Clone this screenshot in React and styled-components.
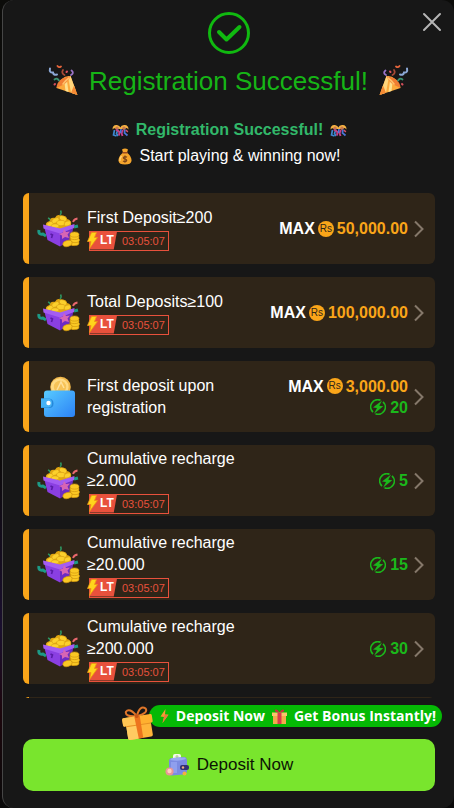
import React, { useState } from 'react';
import styled, { createGlobalStyle } from 'styled-components';

const GlobalStyle = createGlobalStyle`
    * {
        box-sizing: border-box;
        margin: 0;
        padding: 0;
    }
    body {
        background: linear-gradient(#0c0c0a 0%, #0c0a08 55%, #1a0f2e 78%, #1c060c 88%, #0a0a0a 100%);
        font-family: "Liberation Sans", Arial, sans-serif;
        color: white;
    }
    button {
        font-family: inherit;
        border: none;
        background: none;
        cursor: pointer;
    }
    svg {
        display: block;
        flex-shrink: 0;
    }
`;

const tasks = [
    { id: 1, title: 'First Deposit≥200', max: '50,000.00', timer: '03:05:07' },
    { id: 2, title: 'Total Deposits≥100', max: '100,000.00', timer: '03:05:07' },
    { id: 3, title: 'First deposit upon registration', max: '3,000.00', energy: 20, wallet: true },
    { id: 4, title: 'Cumulative recharge ≥2.000', energy: 5, timer: '03:05:07' },
    { id: 5, title: 'Cumulative recharge ≥20.000', energy: 15, timer: '03:05:07' },
    { id: 6, title: 'Cumulative recharge ≥200.000', energy: 30, timer: '03:05:07' },
];

//Icons
const CheckIcon = () => (
    <svg width="42" height="42" viewBox="0 0 42 42" fill="none" stroke="#10b910">
        <circle cx="21" cy="21" r="19.5" strokeWidth="3" />
        <path d="M11 20 L18.5 27.500 L31.500 15" strokeWidth="4" strokeLinecap="round" strokeLinejoin="round" />
    </svg>
);

const CloseIcon = () => (
    <svg width="20" height="20" viewBox="0 0 20 20" stroke="#b5b5b5" strokeWidth="2" strokeLinecap="round">
        <path d="M2 2 L18 18 M18 2 L2 18" />
    </svg>
);

const ChevronIcon = () => (
    <svg width="10" height="18" viewBox="0 0 10 18" fill="none" stroke="#85786a" strokeWidth="2">
        <path d="M1 1.5 L8.5 9 L1 16.5" />
    </svg>
);

const PopperIcon = ({ flip }) => (
    <svg width="32" height="32" viewBox="0 0 32 32" fill="none" strokeLinecap="round">
        <g transform={flip ? undefined : 'translate(32 0) scale(-1 1)'}>
            <path d="M1.500 30 L8.500 11 Q18 10 22.500 23 Z" fill="#fba93c" />
            <path d="M4 23.500 L8.500 11 L11 11.500 L8 27.800 L3 29.500 Z" fill="#ffd67c" />
            <path d="M12.500 12 L15 13.500 L13.500 26 L10.500 27 Z" fill="#fde08d" />
            <path d="M8.500 11 Q10 18 22.500 23 Q22 13 8.500 11 Z" fill="#f07d32" />
            <path d="M1.500 30 L5 20.500 L8 27.800 Z" fill="#f58a34" />
            <path d="M10 13 Q13 15 16 19" stroke="#ffc069" strokeWidth="1.600" />
            <path d="M8 10 Q4.500 8 7.500 5.500" stroke="#9b74c8" strokeWidth="1.800" />
            <path d="M14.500 10 Q18 8 16 5" stroke="#a84a35" strokeWidth="1.800" />
            <path d="M22 9.500 Q25.500 10.500 26 7.500 Q30 8 29 3.500" stroke="#8ca8d6" strokeWidth="2" />
            <path d="M18 1.500 Q20 3 21.500 1" stroke="#e5653c" strokeWidth="1.800" />
            <path d="M20 15.500 Q22 12.500 24.500 14.500" stroke="#3c9273" strokeWidth="1.800" />
            <path d="M12 6.500 L12.500 7 M24 19 L24.500 19.500" stroke="#d94f5c" strokeWidth="2" />
        </g>
    </svg>
);

const ConfettiIcon = () => (
    <svg width="17" height="13" viewBox="0 0 17 13" fill="none">
        <path d="M0.500 5.500 Q0.500 0.500 5 1 Q8 1.500 8.300 3.500 Q9 1 12 1 Q16.500 0.500 16.500 5.500 Q14 3 12.500 5 L8.300 5 L4.500 5 Q2.500 3.500 0.500 5.500 Z" fill="#f5b142" />
        <circle cx="5" cy="4.200" r="1.700" fill="#c8794e" />
        <circle cx="12" cy="4.200" r="1.700" fill="#c8794e" />
        <path d="M2.500 6 L1.500 11 L4.500 12 M6 5.500 L4.500 9.500 L6 12" stroke="#3d87cf" strokeWidth="1.700" />
        <path d="M4 5.500 L7.500 8 L7 11.500 M11 6 L9.500 9 L10.500 12" stroke="#c33e86" strokeWidth="1.900" />
        <path d="M13 5.500 L12.500 9 L15.500 11.500 M9 5 L8.500 9" stroke="#4a75d8" strokeWidth="1.700" />
        <path d="M14 6 L15.800 8" stroke="#d6506a" strokeWidth="1.500" />
    </svg>
);

const MoneyBagIcon = () => (
    <svg width="14" height="17" viewBox="0 0 14 17">
        <path d="M4 1.500 Q7 -0.500 10 1.500 L9 4.500 Q14 9 13.500 13 Q13 16.500 7 16.500 Q1 16.500 0.500 13 Q0 9 5 4.500 Z" fill="#f5a52c" />
        <path d="M3.500 8 Q1.500 10.500 2 13" stroke="#ffd27a" strokeWidth="1.500" fill="none" />
        <path d="M4.500 4.800 H9.500" stroke="#9c4a20" strokeWidth="1.500" />
        <path d="M9 9.300 Q7 7.800 5.500 9.300 Q5 10.600 7 11 Q9.300 11.500 8.500 13 Q7 14.300 5 13 M7 7.500 V14.800" fill="none" stroke="#7e4518" strokeWidth="1.200" />
    </svg>
);

const ChestIcon = () => (
    <svg width="44" height="38" viewBox="0 0 44 38">
        <path d="M23 5 Q25 3 23.500 0.500 M11 8 Q14 9 13 12" fill="none" stroke="#2f9460" strokeWidth="1.500" />
        <path d="M36 12 Q37 9 40.500 8.500" fill="none" stroke="#e9686e" strokeWidth="1.800" />
        <path d="M2 20 Q1 25 6 24 L9 26 M37 17 L41 16" fill="none" stroke="#1d9a86" strokeWidth="3" />
        <path d="M9 16 Q8 12 13 11 Q13 7 18 8 Q20 3.500 24 6 Q29 4.500 30 9 Q35 10 34 16 L23 20 Z" fill="#e3a70f" />
        <g fill="#fcd02c" stroke="#cf9410" strokeWidth="0.500">
            <ellipse cx="13.500" cy="14" rx="4" ry="2.500" transform="rotate(-20 13.500 14)" />
            <ellipse cx="18.500" cy="10.500" rx="4" ry="2.500" transform="rotate(-25 18.500 10.500)" />
            <ellipse cx="26" cy="8.500" rx="4" ry="2.500" transform="rotate(25 26 8.500)" />
            <ellipse cx="24" cy="13" rx="4.500" ry="2.700" />
            <ellipse cx="30.500" cy="13.500" rx="3.500" ry="2.400" transform="rotate(-20 30.500 13.500)" />
            <ellipse cx="18" cy="16" rx="4" ry="2.200" />
        </g>
        <path d="M7 16 L23 20 L23 36.500 L10.500 30 Z" fill="#8a3fe2" />
        <path d="M23 20 L37 15 L33.500 30 L23 36.500 Z" fill="#6d2bc4" />
        <path d="M6 14.500 L23 18.500 L37.500 14 L37 18 L23 23.500 L6.500 18.500 Z" fill="#a45df2" />
        <path d="M13.500 24 L15.500 25 L14.500 28" fill="none" stroke="#5a1ba8" strokeWidth="1.600" />
        <path d="M27 19 L29 22 L33 21.500 L30.500 24.500 L32 28 L28 27 L25 29 L25 25.500 L22 24 L26 22.500 Z" fill="#d765b4" />
        <path d="M33 24 H42 V34 L36 36 L32 34 Z" fill="#c78a0a" />
        <g fill="#fac824" stroke="#c98e0c" strokeWidth="0.600">
            <ellipse cx="37.500" cy="33" rx="4.500" ry="2.600" />
            <ellipse cx="38" cy="30" rx="4.500" ry="2.600" />
            <ellipse cx="37.500" cy="27" rx="4.500" ry="2.600" />
            <ellipse cx="37.500" cy="24.500" rx="4.500" ry="2.600" />
            <ellipse cx="30.500" cy="33.500" rx="4.800" ry="3" transform="rotate(-15 30.500 33.500)" />
        </g>
    </svg>
);

const WalletIcon = () => (
    <svg width="44" height="42" viewBox="0 0 44 42">
        <defs>
            <linearGradient id="walletFill" x1="0" y1="0" x2="1" y2="1">
                <stop offset="0" stopColor="#58cbff" />
                <stop offset="1" stopColor="#2c82f6" />
            </linearGradient>
        </defs>
        <circle cx="23.500" cy="11" r="10.300" fill="#f1b84b" />
        <circle cx="22.800" cy="11" r="8.800" fill="#ffda83" />
        <circle cx="23" cy="11" r="6.200" fill="#f7c357" />
        <path d="M20 14 L24 6 L27 12" fill="none" stroke="#ffe09a" strokeWidth="1.500" />
        <rect x="7" y="14.500" width="31" height="26.500" rx="3" fill="url(#walletFill)" />
        <path d="M4 22.500 H12 Q16.500 23 16.500 27.500 Q16.500 32 12 32 H4 Z" fill="#2588dc" />
        <path d="M4 22.500 H11.500 Q15 23 15 27 Q15 31 11.500 31.500 H4 Z" fill="#45b2f5" />
        <circle cx="11.500" cy="27" r="2.200" fill="#fff" />
    </svg>
);

const EnergyIcon = () => (
    <svg width="16" height="16" viewBox="0 0 16 16">
        <path d="M10.500 1.200 A7.200 7.200 0 0 0 3 13.200 M5.500 14.800 A7.200 7.200 0 0 0 13 2.800" fill="none" stroke="#1bb81b" strokeWidth="1.700" />
        <path d="M12 1.500 L3 8.500 L7 9 L4 14.800 L13.300 7.300 L9.300 6.800 Z" fill="#1bb81b" />
    </svg>
);

const BoltIcon = () => (
    <svg width="11" height="17" viewBox="0 0 11 17">
        <path d="M4.500 0.500 H9.500 L7.500 5.500 H10.500 L2.500 16.500 L4 9.500 H0.500 Z" fill="#ffd51c" stroke="#ef9413" strokeWidth="0.800" />
    </svg>
);

const SmallBoltIcon = () => (
    <svg width="9" height="14" viewBox="0 0 9 14">
        <path d="M5.500 0 L0.500 7.500 L4 8 L2.500 14 L8.500 5.800 L5 5.500 Z" fill="#f49a35" />
        <path d="M5 5.500 L8.500 5.800 L2.500 14 L4 8 Z" fill="#e9793d" />
    </svg>
);

const RedGiftIcon = () => (
    <svg width="15" height="15" viewBox="0 0 15 15">
        <rect x="1" y="6" width="13" height="9" fill="#f2aa4c" />
        <rect x="0" y="3.500" width="15" height="3.500" fill="#fac36b" />
        <rect x="5.500" y="3.500" width="4" height="11.500" fill="#d83a4c" />
        <path d="M7.500 3.500 Q2 3.500 3 0.800 Q5.500 -0.500 7.500 3.500 Q9.500 -0.500 12 0.800 Q13 3.500 7.500 3.500" fill="#c9303f" />
    </svg>
);

const GiftIcon = () => (
    <svg width="34" height="34" viewBox="0 0 34 34">
        <g transform="rotate(-9 17 18)">
            <path d="M17 10 Q5 9 7 4 Q11 0 17 10 Q22 -1 27 4 Q29 9 17 10" fill="none" stroke="#df762a" strokeWidth="2" />
            <rect x="5" y="17" width="25" height="15.500" rx="2" fill="#ffb43a" />
            <rect x="5" y="17" width="12" height="15.500" rx="2" fill="#ffcb61" />
            <rect x="2" y="10" width="30" height="8.500" rx="1.500" fill="#ffb02f" />
            <rect x="2" y="10" width="14" height="8.500" rx="1.500" fill="#ffc554" />
            <path d="M5 19 H30" stroke="#e79023" strokeWidth="1" />
            <path d="M14.500 10 H20 V32.500 H15.500 Z" fill="#ed741d" />
            <circle cx="17" cy="10" r="2" fill="#c95616" />
        </g>
    </svg>
);

const PurseIcon = () => (
    <svg width="24" height="24" viewBox="0 0 24 24">
        <rect x="8" y="1" width="8" height="8" rx="2" fill="#f5f8ec" />
        <circle cx="12" cy="3.500" r="1.500" fill="#bcd99b" />
        <path d="M4 7 Q5 4.500 8 5 L19 4 Q22 4 22 8 L22 18 Q22 21 18 21.500 L7 22.500 Q4 22.500 4 18 Z" fill="#7b8be2" />
        <path d="M5 7 Q14 9 21 6 L20 4.500 L7 5 Z" fill="#9aabf2" />
        <path d="M6 9 H12 V20 H6 Z" fill="#8f9fee" />
        <rect x="15" y="12" width="9" height="5" rx="2" fill="#343073" />
        <circle cx="18" cy="14.500" r="1.200" fill="#edae7a" />
        <circle cx="19.500" cy="20.500" r="2" fill="#f3b13e" />
        <circle cx="4.500" cy="18.500" r="4" fill="#e99696" />
        <circle cx="4.500" cy="18" r="2.200" fill="#ffd0bc" />
    </svg>
);

//Task row
const Task = ({ task }) => {
    return (
        <TaskRow type="button">
            <TaskIcon>{task.wallet ? <WalletIcon /> : <ChestIcon />}</TaskIcon>
            <TaskInfo>
                <TaskTitle>{task.title}</TaskTitle>
                {task.timer && (
                    <Timer>
                        <TimerLabel>LT</TimerLabel>
                        <TimerValue>{task.timer}</TimerValue>
                        <TimerBolt><BoltIcon /></TimerBolt>
                    </Timer>
                )}
            </TaskInfo>
            <Rewards>
                {task.max && (
                    <Reward $color="#faa519">
                        <Max>MAX</Max>
                        <Coin>Rs</Coin>
                        <span>{task.max}</span>
                    </Reward>
                )}
                {task.energy && (
                    <Reward $color="#1bb81b" $wide>
                        <EnergyIcon />
                        <span>{task.energy}</span>
                    </Reward>
                )}
            </Rewards>
            <ChevronIcon />
        </TaskRow>
    );
};

const App = () => {
    const [open, setOpen] = useState(true);

    return (
        <>
            <GlobalStyle />
            {open && (
                <Page>
                    <Modal role="dialog" aria-labelledby="title">
                        <CloseButton type="button" aria-label="Close" onClick={() => setOpen(false)}>
                            <CloseIcon />
                        </CloseButton>
                        <Header>
                            <CheckIcon />
                            <Title id="title">
                                <PopperIcon />
                                Registration Successful!
                                <PopperIcon flip />
                            </Title>
                            <Message>
                                <MessageLine $strong>
                                    <ConfettiIcon />
                                    Registration Successful!
                                    <ConfettiIcon />
                                </MessageLine>
                                <MessageLine>
                                    <MoneyBagIcon />
                                    Start playing &amp; winning now!
                                </MessageLine>
                            </Message>
                        </Header>
                        <TaskList>
                            {tasks.map((task) => (
                                <li key={task.id}>
                                    <Task task={task} />
                                </li>
                            ))}
                            <li aria-hidden="true">
                                <TaskRow as="div" />
                            </li>
                        </TaskList>
                        <Footer>
                            <Banner>
                                <BannerGift><GiftIcon /></BannerGift>
                                <SmallBoltIcon />
                                <BannerText>Deposit Now</BannerText>
                                <RedGiftIcon />
                                <BannerText>Get Bonus Instantly!</BannerText>
                            </Banner>
                            <DepositButton type="button">
                                <PurseIcon />
                                Deposit Now
                            </DepositButton>
                        </Footer>
                    </Modal>
                </Page>
            )}
        </>
    );
};

const Page = styled.div`
    height: 100vh;
    padding-left: 2px;
`;

const Modal = styled.main`
    position: relative;
    display: flex;
    flex-direction: column;
    height: 100%;
    background: #171717;
    border-left: 1px solid #464646;
    border-radius: 12px;
    overflow: hidden;
`;

const CloseButton = styled.button`
    position: absolute;
    top: 12px;
    right: 12px;
`;

const Header = styled.header`
    display: flex;
    flex-direction: column;
    align-items: center;
    padding: 12px 20px 24px;
`;

const Title = styled.h1`
    display: flex;
    align-items: center;
    gap: 10px;
    margin-top: 9px;
    font-size: 26px;
    font-weight: 400;
    line-height: 36px;
    color: #16b516;
    white-space: nowrap;
`;

const Message = styled.div`
    margin-top: 18px;
    padding-left: 2px;
`;

const MessageLine = styled.p`
    display: flex;
    align-items: center;
    justify-content: center;
    gap: 7px;
    font-size: 16px;
    line-height: 26px;
    font-weight: ${(props) => (props.$strong ? 700 : 400)};
    color: ${(props) => (props.$strong ? '#32b86a' : '#fff')};
`;

const TaskList = styled.ul`
    flex: 1;
    min-height: 0;
    display: flex;
    flex-direction: column;
    gap: 13px;
    padding: 0 19px 0 20px;
    list-style: none;
    overflow: hidden;
`;

const TaskRow = styled.button`
    display: flex;
    align-items: center;
    width: 100%;
    min-height: 71px;
    padding: 0 11px 0 8px;
    background: #2f2518;
    border-left: 6px solid #faa519;
    border-radius: 6px;
    color: white;
    text-align: left;
`;

const TaskIcon = styled.div`
    width: 44px;
    margin-right: 6px;
    flex-shrink: 0;
`;

const TaskInfo = styled.div`
    display: flex;
    flex-direction: column;
    align-items: flex-start;
    gap: 2px;
    width: 152px;
`;

const TaskTitle = styled.h3`
    font-size: 16px;
    font-weight: 400;
    line-height: 22px;
`;

const Timer = styled.div`
    position: relative;
    display: flex;
    align-items: center;
    height: 20px;
    margin-left: 2px;
    border: 1px solid #e8513c;
    font-size: 11px;
    color: #e8513c;
`;

const TimerBolt = styled.span`
    position: absolute;
    left: -3px;
    top: 0;
`;

const TimerLabel = styled.span`
    width: 27px;
    height: 100%;
    padding-left: 10px;
    background: #e8513c;
    clip-path: polygon(0 0, 100% 0, 88% 100%, 0 100%);
    font-size: 12px;
    font-weight: 700;
    line-height: 16px;
    color: white;
`;

const TimerValue = styled.span`
    padding: 0 3px 0 5px;
`;

const Rewards = styled.div`
    flex: 1;
    display: flex;
    flex-direction: column;
    align-items: flex-end;
    margin-right: 6px;
`;

const Reward = styled.div`
    display: flex;
    align-items: center;
    gap: ${(props) => (props.$wide ? 4 : 3)}px;
    font-size: 16px;
    font-weight: 700;
    line-height: 21px;
    color: ${(props) => props.$color};
`;

const Max = styled.span`
    color: white;
`;

const Coin = styled.span`
    width: 16px;
    height: 16px;
    border-radius: 50%;
    background: #faa519;
    color: #2f2518;
    font-size: 10px;
    font-weight: 400;
    line-height: 16px;
    text-align: center;
`;

const Footer = styled.footer`
    display: flex;
    flex-direction: column;
    gap: 12px;
    padding: 7px 19px 17px 20px;
`;

const Banner = styled.div`
    position: relative;
    align-self: flex-end;
    display: flex;
    align-items: center;
    gap: 7px;
    height: 22px;
    margin-right: -7px;
    padding: 0 6px 0 11px;
    border-radius: 11px;
    background: #05b905;
`;

const BannerGift = styled.span`
    position: absolute;
    left: -28px;
    top: 1px;
`;

const BannerText = styled.span`
    font-family: "Open Sans", "Noto Sans", sans-serif;
    font-size: 14px;
    font-weight: 700;
    line-height: 22px;
    white-space: nowrap;
`;

const DepositButton = styled.button`
    display: flex;
    align-items: center;
    justify-content: center;
    gap: 8px;
    height: 52px;
    border-radius: 10px;
    background: #79e52d;
    font-size: 17px;
    color: #0c1404;
`;

export default App;
